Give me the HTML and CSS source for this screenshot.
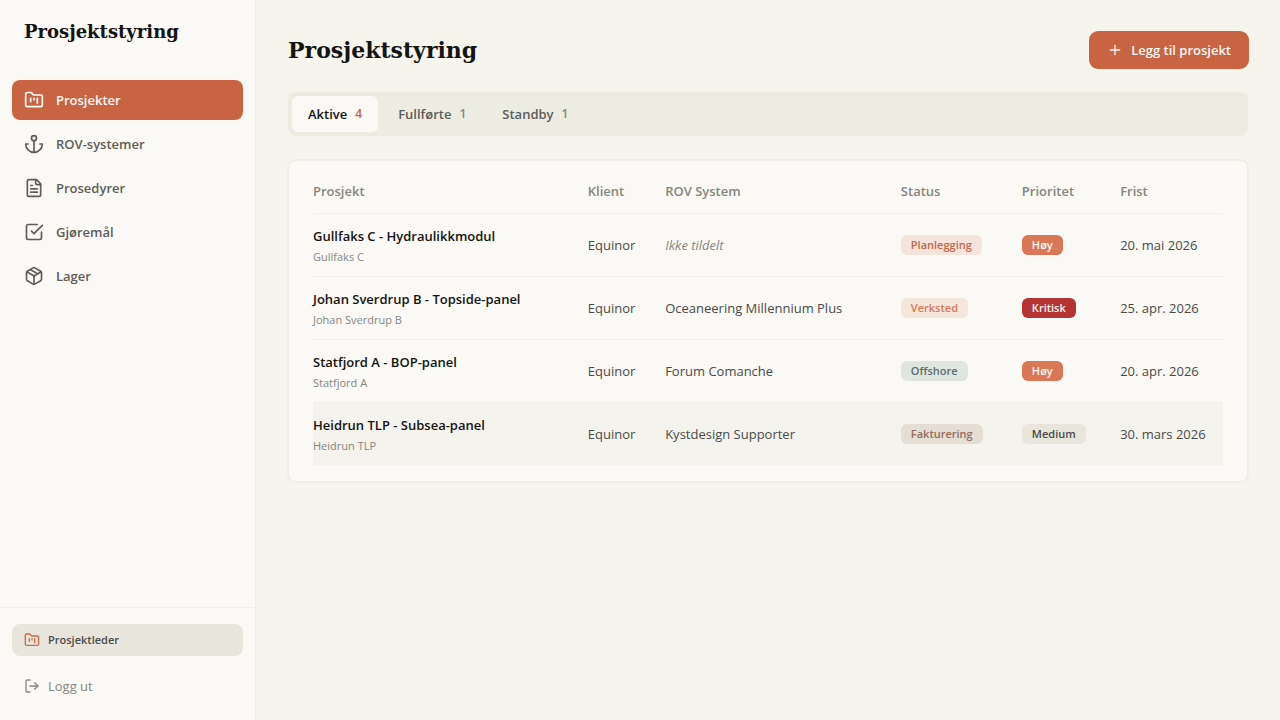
FILE: index.html
```html
<!DOCTYPE html>
<html lang="nb">
<head>
<meta charset="utf-8">
<meta name="viewport" content="width=device-width, initial-scale=1">
<title>Prosjektstyring</title>
<link rel="stylesheet" href="styles.css">
</head>
<body>
<svg class="sprite" aria-hidden="true">
  <symbol id="folder" viewBox="0 0 24 24"><path d="M4 20h16a2 2 0 0 0 2-2V8a2 2 0 0 0-2-2h-7.93a2 2 0 0 1-1.66-.9l-.82-1.2A2 2 0 0 0 7.93 3H4a2 2 0 0 0-2 2v13c0 1.1.9 2 2 2Z"/><path d="M8 10v4"/><path d="M12 10v2"/><path d="M16 10v6"/></symbol>
  <symbol id="anchor" viewBox="0 0 24 24"><path d="M12 22V8"/><path d="M5 12H2a10 10 0 0 0 20 0h-3"/><circle cx="12" cy="5" r="3"/></symbol>
  <symbol id="file" viewBox="0 0 24 24"><path d="M15 2H6a2 2 0 0 0-2 2v16a2 2 0 0 0 2 2h12a2 2 0 0 0 2-2V7Z"/><path d="M14 2v4a2 2 0 0 0 2 2h4"/><path d="M10 9H8"/><path d="M16 13H8"/><path d="M16 17H8"/></symbol>
  <symbol id="check" viewBox="0 0 24 24"><path d="m9 11 3 3L22 4"/><path d="M21 12v7a2 2 0 0 1-2 2H5a2 2 0 0 1-2-2V5a2 2 0 0 1 2-2h11"/></symbol>
  <symbol id="package" viewBox="0 0 24 24"><path d="m7.5 4.27 9 5.15"/><path d="M21 8a2 2 0 0 0-1-1.73l-7-4a2 2 0 0 0-2 0l-7 4A2 2 0 0 0 3 8v8a2 2 0 0 0 1 1.73l7 4a2 2 0 0 0 2 0l7-4A2 2 0 0 0 21 16Z"/><path d="m3.3 7 8.7 5 8.7-5"/><path d="M12 22V12"/></symbol>
  <symbol id="logout" viewBox="0 0 24 24"><path d="M9 21H5a2 2 0 0 1-2-2V5a2 2 0 0 1 2-2h4"/><path d="m16 17 5-5-5-5"/><path d="M21 12H9"/></symbol>
  <symbol id="plus" viewBox="0 0 24 24"><path d="M5 12h14"/><path d="M12 5v14"/></symbol>
</svg>
<div class="app">
  <aside class="sidebar">
    <div class="brand">Prosjektstyring</div>
    <nav class="nav">
      <a class="nav-item active" href="#" aria-current="page"><svg class="icon"><use href="#folder"/></svg>Prosjekter</a>
      <a class="nav-item" href="#"><svg class="icon"><use href="#anchor"/></svg>ROV-systemer</a>
      <a class="nav-item" href="#"><svg class="icon"><use href="#file"/></svg>Prosedyrer</a>
      <a class="nav-item" href="#"><svg class="icon"><use href="#check"/></svg>Gjøremål</a>
      <a class="nav-item" href="#"><svg class="icon"><use href="#package"/></svg>Lager</a>
    </nav>
    <div class="account">
      <div class="role"><svg class="icon small"><use href="#folder"/></svg>Prosjektleder</div>
      <button class="logout" type="button"><svg class="icon small"><use href="#logout"/></svg>Logg ut</button>
    </div>
  </aside>
  <main class="main">
    <header class="header">
      <h1 class="title">Prosjektstyring</h1>
      <button class="add" type="button"><svg class="icon small"><use href="#plus"/></svg>Legg til prosjekt</button>
    </header>
    <div class="tabs" role="tablist">
      <button class="tab active" type="button" role="tab" aria-selected="true">Aktive<span class="count">4</span></button>
      <button class="tab" type="button" role="tab" aria-selected="false">Fullførte<span class="count">1</span></button>
      <button class="tab" type="button" role="tab" aria-selected="false">Standby<span class="count">1</span></button>
    </div>
    <section class="card">
      <table class="projects">
        <colgroup><col class="c-project"><col class="c-client"><col class="c-system"><col class="c-status"><col class="c-priority"><col class="c-due"></colgroup>
        <thead>
          <tr><th>Prosjekt</th><th>Klient</th><th>ROV System</th><th>Status</th><th>Prioritet</th><th>Frist</th></tr>
        </thead>
        <tbody>
          <tr><td class="project"><div class="name">Gullfaks C - Hydraulikkmodul</div><div class="site">Gullfaks C</div></td><td>Equinor</td><td class="unset">Ikke tildelt</td><td><span class="badge planning">Planlegging</span></td><td><span class="badge high">Høy</span></td><td>20. mai 2026</td></tr>
          <tr><td class="project"><div class="name">Johan Sverdrup B - Topside-panel</div><div class="site">Johan Sverdrup B</div></td><td>Equinor</td><td>Oceaneering Millennium Plus</td><td><span class="badge workshop">Verksted</span></td><td><span class="badge critical">Kritisk</span></td><td>25. apr. 2026</td></tr>
          <tr><td class="project"><div class="name">Statfjord A - BOP-panel</div><div class="site">Statfjord A</div></td><td>Equinor</td><td>Forum Comanche</td><td><span class="badge offshore">Offshore</span></td><td><span class="badge high">Høy</span></td><td>20. apr. 2026</td></tr>
          <tr class="hovered"><td class="project"><div class="name">Heidrun TLP - Subsea-panel</div><div class="site">Heidrun TLP</div></td><td>Equinor</td><td>Kystdesign Supporter</td><td><span class="badge billing">Fakturering</span></td><td><span class="badge medium">Medium</span></td><td>30. mars 2026</td></tr>
        </tbody>
      </table>
    </section>
  </main>
</div>
</body>
</html>
```
FILE: styles.css
```css
* { box-sizing: border-box; }

body {
  margin: 0;
  background: #f5f4ed;
  color: #4a4a48;
  font: 13px/20px "Segoe UI", "Open Sans", "Noto Sans", sans-serif;
}

button {
  border: 0;
  background: none;
  font: inherit;
  cursor: pointer;
}

.sprite { position: absolute; width: 0; height: 0; }

.icon {
  width: 20px;
  height: 20px;
  flex: none;
  fill: none;
  stroke: currentColor;
  stroke-width: 2;
  stroke-linecap: round;
  stroke-linejoin: round;
}
.icon.small { width: 16px; height: 16px; }

.app { display: flex; min-height: 100vh; }

.sidebar {
  display: flex;
  flex-direction: column;
  flex: none;
  width: 256px;
  background: #faf9f5;
  border-right: 1px solid #efeee8;
}

.brand, .title {
  margin: 0;
  color: #141413;
  font-family: Georgia, "DejaVu Serif", serif;
  font-weight: 700;
}
.brand { padding: 0 24px; font-size: 18px; line-height: 64px; }
.title { font-size: 22px; line-height: 36px; }

.nav { display: flex; flex: 1; flex-direction: column; gap: 4px; padding: 16px 12px; }

.nav-item {
  display: flex;
  align-items: center;
  gap: 12px;
  height: 40px;
  padding: 0 12px;
  border-radius: 8px;
  color: #5e5d59;
  font-weight: 600;
  text-decoration: none;
}
.nav-item.active { background: #c96442; color: #faf9f5; }

.account {
  display: flex;
  flex-direction: column;
  gap: 12px;
  padding: 16px 12px;
  border-top: 1px solid #efeee8;
}

.role, .logout { display: flex; align-items: center; gap: 8px; padding: 0 12px; }
.role {
  height: 32px;
  border-radius: 8px;
  background: #e8e6dc;
  color: #4a4a48;
  font-size: 11px;
  font-weight: 600;
}
.role .icon { color: #d0694a; }
.logout { height: 36px; color: #87867f; }

.main { flex: 1; min-width: 0; padding: 32px; }

.header {
  display: flex;
  align-items: center;
  justify-content: space-between;
  margin-bottom: 24px;
}

.add {
  display: flex;
  align-items: center;
  gap: 8px;
  height: 36px;
  padding: 0 17px;
  border-radius: 8px;
  background: #c96442;
  box-shadow: 0 0 0 1px #c96442;
  color: #faf9f5;
  font-weight: 600;
}

.tabs {
  display: flex;
  gap: 4px;
  margin-bottom: 24px;
  padding: 4px;
  border-radius: 8px;
  background: #ecece3;
}

.tab {
  display: flex;
  align-items: center;
  gap: 8px;
  height: 36px;
  padding: 0 16px;
  border-radius: 6px;
  color: #5e5d59;
  font-weight: 600;
}
.tab.active { background: #faf9f5; color: #141413; }
.count { color: #87867f; font-size: 12px; }
.tab.active .count { color: #c96442; }

.card {
  padding: 16px 24px;
  border: 1px solid #efeee6;
  border-radius: 8px;
  background: #faf9f5;
  box-shadow: 0 0 0 1px #efeee6;
}

.projects { width: 100%; border-spacing: 0; table-layout: fixed; }
.c-project { width: 30.2%; }
.c-client { width: 8.5%; }
.c-system { width: 25.9%; }
.c-status { width: 13.3%; }
.c-priority { width: 10.8%; }
.c-due { width: 11.3%; }

.projects th, .projects td {
  padding: 0;
  border-bottom: 1px solid #efeee8;
  text-align: left;
  white-space: nowrap;
}
.projects th { padding: 4px 0 12px; color: #87867f; font-weight: 600; }
.projects .project { padding: 12px 0 10px; }
.projects tbody tr:last-child td { border-bottom: 0; }
.projects .hovered td { background: #f4f3ee; }

.name { color: #141413; font-weight: 600; line-height: 20px; }
.site { margin-top: 2px; color: #87867f; font-size: 11px; line-height: 18px; }
.projects .unset { color: #87867f; font-style: italic; }

.badge {
  display: inline-block;
  padding: 0 10px;
  border-radius: 6px;
  font-size: 11px;
  font-weight: 600;
  line-height: 20px;
  vertical-align: top;
}
.planning { background: #f4e4dc; color: #c96442; }
.workshop { background: #f4e6dc; color: #d97757; }
.offshore { background: #dfe6e0; color: #5c6b73; }
.billing { background: #e4ded5; color: #966b5c; }
.high { background: #d97757; color: #faf9f5; }
.critical { background: #b53333; color: #faf9f5; }
.medium { background: #e8e6dc; color: #4a4a48; }
```
